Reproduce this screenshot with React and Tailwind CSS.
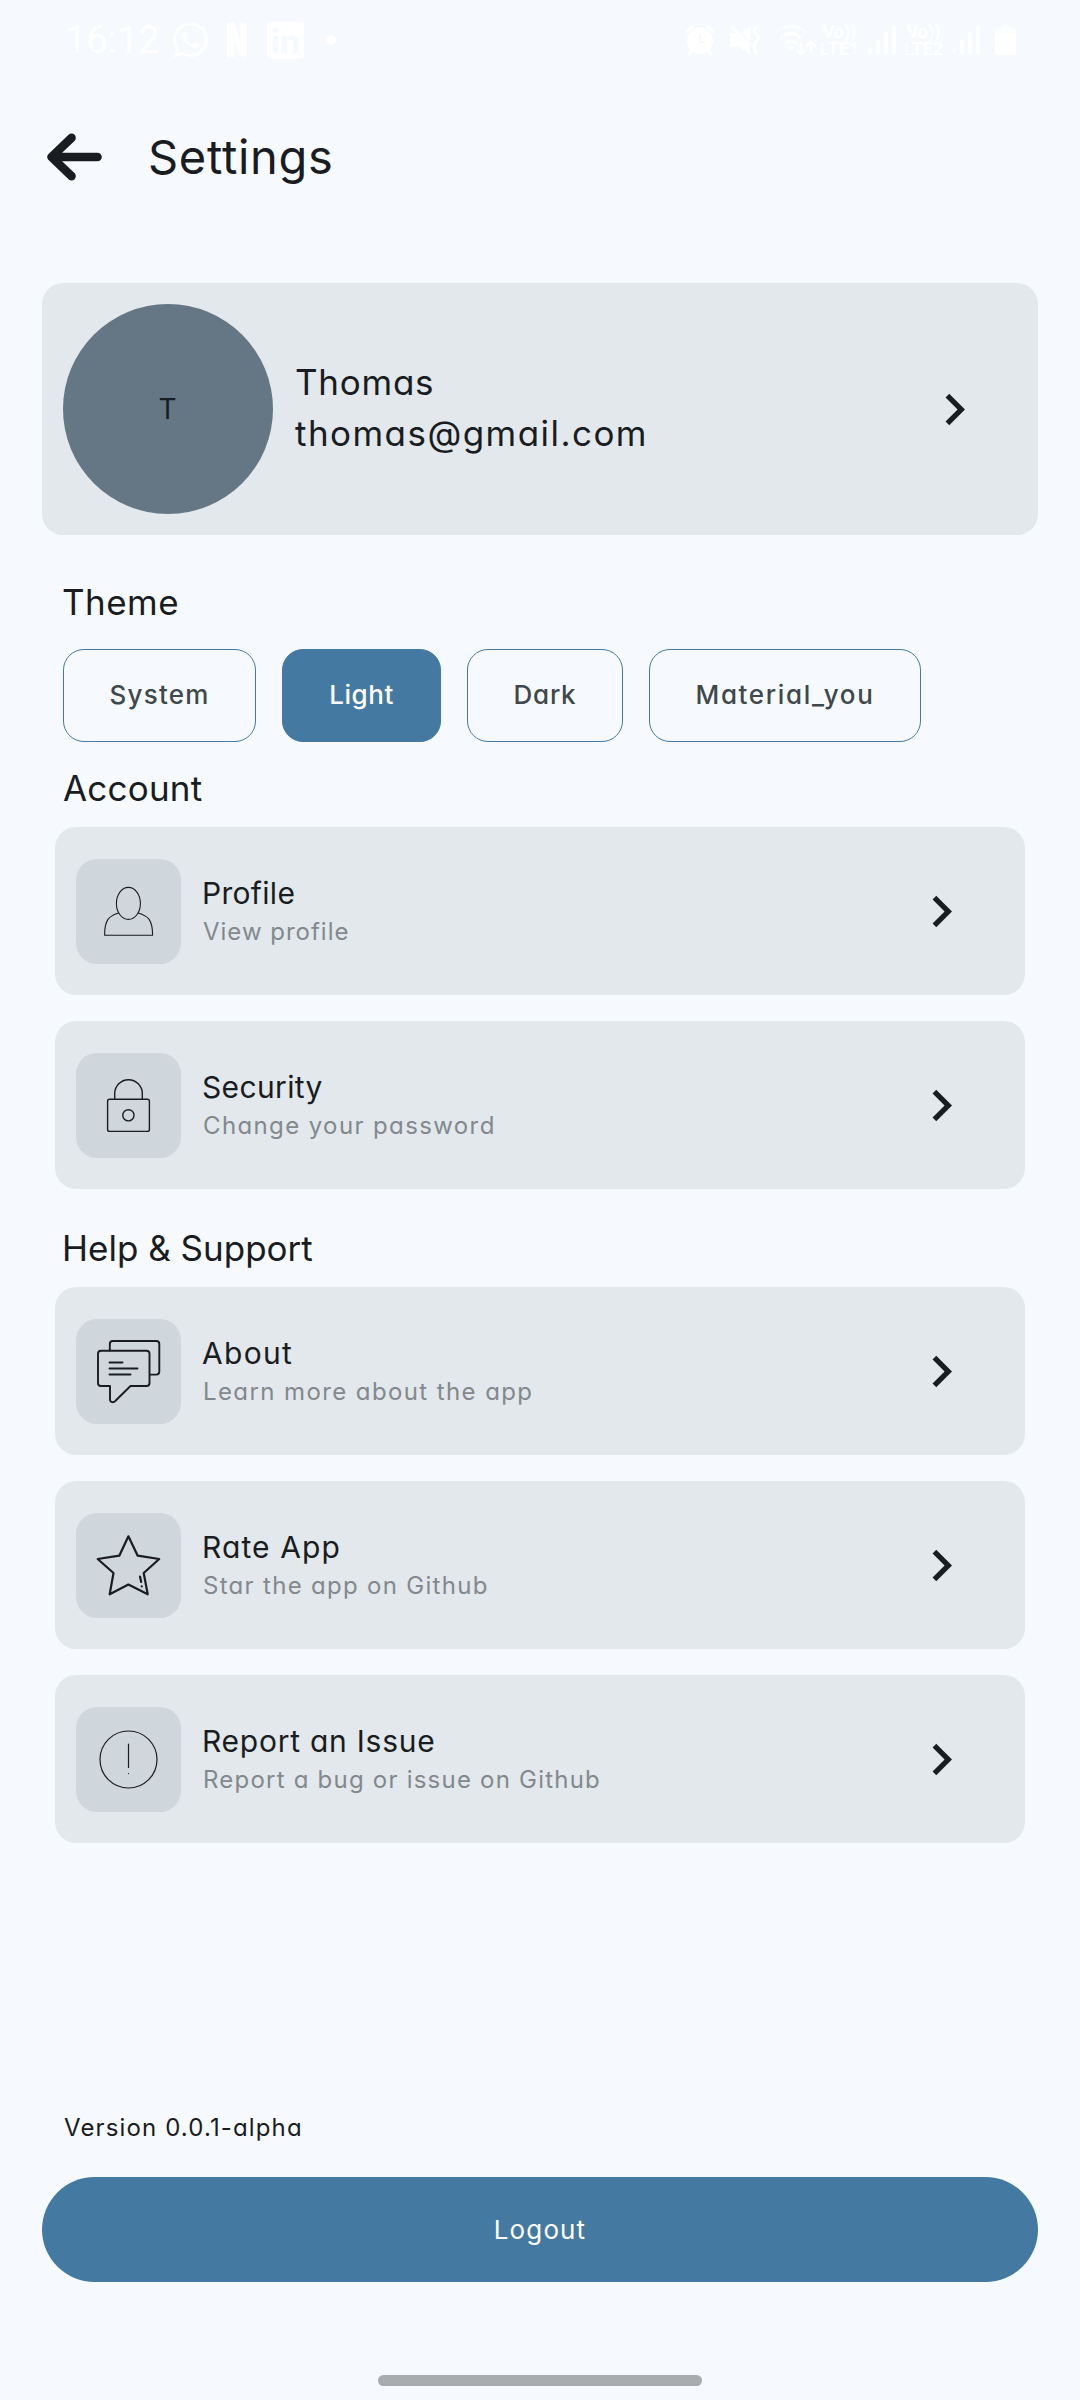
import React from "react";
import { FaWhatsapp, FaLinkedin } from "react-icons/fa";

const ink = "#191c20";

function Chevron() {
  return (
    <svg viewBox="0 0 24 24" className="h-[63px] w-[63px] shrink-0" fill={ink}>
      <path d="M10 6L8.59 7.41 13.17 12l-4.58 4.59L10 18l6-6z" />
    </svg>
  );
}

const iconProps = {
  viewBox: "0 0 105 105",
  className: "h-[105px] w-[105px]",
  fill: "none",
  stroke: ink,
  strokeLinejoin: "round",
  strokeLinecap: "round",
};

const ProfileIcon = () => (
  <svg {...iconProps} strokeWidth="1.1">
    <ellipse cx="52.4" cy="44.4" rx="12" ry="16" />
    <path d="M42.5 54C33 57 28.6 60.5 28.6 76.3H76.6C76.6 60.5 72 57 62.3 54" />
  </svg>
);

const LockIcon = () => (
  <svg {...iconProps} strokeWidth="1.4">
    <rect x="31.6" y="46.2" width="41.8" height="32.2" rx="2" />
    <path d="M38.7 46V40.5a13.8 13.8 0 0 1 27.6 0V46" />
    <circle cx="52.4" cy="62.3" r="5.6" />
  </svg>
);

const ChatIcon = () => (
  <svg {...iconProps} strokeWidth="1.9">
    <path d="M33.8 31.5V25a3 3 0 0 1 3-3H80.3a3 3 0 0 1 3 3V52.6a3 3 0 0 1-3 3H74" />
    <path d="M25 31.8H70.5a3 3 0 0 1 3 3V64a3 3 0 0 1-3 3H54.5L39.5 81.8C37.5 84 34 83.5 34 80.5V67H25a3 3 0 0 1-3-3V34.8a3 3 0 0 1 3-3Z" />
    <path d="M33.5 43.5H46.5M33.5 49.5H61.5M33.5 55.5H54.5" />
  </svg>
);

const StarIcon = () => (
  <svg {...iconProps} strokeWidth="2.2">
    <path d="M52.4 23.3L61.7 42.7L83.2 46L67.7 60L71.7 81.3L52.4 71.5L33.7 81.3L37.5 60L21.7 46L43.3 42.7Z" />
    <path d="M64 63.5L65.2 69M65.8 73.3v.1" />
  </svg>
);

const IssueIcon = () => (
  <svg {...iconProps} strokeWidth="1.2">
    <circle cx="52.5" cy="52.5" r="28.5" />
    <path d="M52.5 37V60.5M52.5 66.5v.1" />
  </svg>
);

function Row({ icon, title, titleClass, sub, subClass }) {
  return (
    <div className="flex h-[168px] items-center rounded-[21px] bg-[#e2e8eb] pr-[52px] pl-[21px]">
      <div className="h-[105px] w-[105px] shrink-0 rounded-[21px] bg-[#cfd6dc]">{icon}</div>
      <div className="ml-[21px] flex flex-1 flex-col pt-px whitespace-nowrap">
        <span className={"text-[30px] leading-[40px] " + titleClass}>{title}</span>
        <span className={"pl-px text-[24px] leading-[37px] text-[#82888c] " + subClass}>{sub}</span>
      </div>
      <Chevron />
    </div>
  );
}

function VoLte({ n, gap }) {
  return (
    <div className={"flex h-[34px] w-[39px] flex-col items-center font-['Roboto'] text-[18px] leading-[17px] font-bold whitespace-nowrap " + gap}>
      <span>Vo))</span>
      <span>{"LTE" + n}</span>
    </div>
  );
}

function Signal() {
  return (
    <svg viewBox="0 0 28 30" className="ml-[9px] h-[30px] w-[28px]" stroke="currentColor" strokeWidth="3.5" strokeLinecap="round">
      <path d="M2 24V28M10 17V28M18 9V28M26 2V28" />
    </svg>
  );
}

function StatusBar() {
  return (
    <div className="flex h-[80px] shrink-0 items-center justify-between pr-[64px] pl-[65px] text-white">
      <div className="flex items-center">
        <span className="w-[107px] font-['Roboto'] text-[38px] leading-none">16:12</span>
        <FaWhatsapp className="h-[40px] w-[37px]" />
        <svg viewBox="0 0 20 36" className="ml-[18px] h-[36px] w-[20px]" fill="currentColor">
          <path d="M0 0h7l6 17V0h7v36l-7-1L7 18v17l-7 1z" />
        </svg>
        <FaLinkedin className="ml-[20px] h-[42px] w-[37px]" />
        <span className="ml-[22px] h-[10px] w-[10px] rounded-full bg-white" />
      </div>
      <div className="flex items-center">
        <svg viewBox="0 0 30 30" className="h-[30px] w-[30px]" stroke="currentColor" strokeLinecap="round">
          <circle cx="15" cy="16" r="13" fill="currentColor" stroke="none" />
          <path d="M2 6L7 2M28 6L23 2M5 28L8 25M25 28L22 25" strokeWidth="3.5" fill="none" />
          <path d="M15 9.5V17H20" stroke="#f6faff" strokeWidth="2" fill="none" />
        </svg>
        <svg viewBox="0 0 30 30" className="ml-[15px] h-[30px] w-[30px]" fill="currentColor">
          <path d="M0 9H7L20 22V30L8 21H0zM12 8L20 1V16z" />
          <path d="M2 2L20 20M27 2Q22 5 26 9T26 17T26 28" fill="none" stroke="currentColor" strokeWidth="3" strokeLinecap="round" />
        </svg>
        <svg viewBox="0 0 42 32" className="ml-[14px] h-[32px] w-[42px]" fill="none" stroke="currentColor" strokeWidth="3" strokeLinecap="round">
          <path d="M2 8Q17-4 32 8" opacity=".5" />
          <path d="M7 14Q17 5 27 14M12 19Q17 15 22 19" />
          <circle cx="17" cy="24" r="1" fill="currentColor" />
          <path d="M27 20V29M23 26L27 30L31 26M37 28V18M33 22L37 18L41 22" strokeWidth="2.5" />
        </svg>
        <VoLte n="1" gap="ml-[4px]" />
        <Signal />
        <VoLte n="2" gap="ml-[8px]" />
        <Signal />
        <svg viewBox="0 0 21 30" className="ml-[15px] h-[30px] w-[21px]" fill="currentColor">
          <path d="M0 9V5Q0 3 3 3H6Q6 0 9 0H12Q15 0 15 3H18Q21 3 21 5V9z" opacity=".5" />
          <path d="M0 9H21V27Q21 30 18 30H3Q0 30 0 27z" />
        </svg>
      </div>
    </div>
  );
}

function Chip({ selected, size, label }) {
  return (
    <button
      className={
        "flex h-[93px] items-center justify-center rounded-[21px] border border-[#4479a1] pb-[2px] text-[26px] leading-none font-medium " +
        (selected ? "bg-[#4479a1] text-white " : "text-[#3f484c] ") +
        size
      }
    >
      {label}
    </button>
  );
}

export default function App() {
  return (
    <div className="flex h-[2400px] w-[1080px] flex-col overflow-hidden bg-[#f6faff] font-['Inter',sans-serif] text-[#191c20] [font-feature-settings:'cv11']">
      <StatusBar />

      <header className="flex h-[154px] shrink-0 items-center pl-[46px]">
        <svg viewBox="0 0 56 48" className="h-[48px] w-[56px]" fill="none" stroke={ink} strokeWidth="8.6" strokeLinecap="round" strokeLinejoin="round">
          <path d="M51.5 24H7M25.5 4.8L5.5 24L25.5 43.2" />
        </svg>
        <h1 className="ml-[46px] text-[47px] leading-[60px] tracking-[0.7px]">Settings</h1>
      </header>

      <section className="mx-[42px] mt-[49px] flex h-[252px] shrink-0 items-center rounded-[21px] bg-[#e2e8eb] pr-[52px] pl-[21px]">
        <div className="flex h-[210px] w-[210px] shrink-0 items-center justify-center rounded-full bg-[#657785] text-[28px]">
          <span className="pr-px">T</span>
        </div>
        <div className="ml-[22px] flex flex-1 flex-col pb-[2px] text-[35px] leading-[51px]">
          <span className="tracking-[0.75px]">Thomas</span>
          <span className="tracking-[1.45px]">thomas@gmail.com</span>
        </div>
        <Chevron />
      </section>

      <h2 className="mt-[42px] ml-[62px] text-[35px] leading-[50px] tracking-[0.47px]">Theme</h2>
      <div className="mt-[22px] ml-[63px] flex gap-[26px]">
        <Chip label="System" size="w-[193px] tracking-[1.2px]" />
        <Chip label="Light" selected size="w-[159px] tracking-[0.55px]" />
        <Chip label="Dark" size="w-[156px] tracking-[0.73px]" />
        <Chip label="Material_you" size="w-[272px] tracking-[1.65px]" />
      </div>

      <h2 className="mt-[21px] ml-[63px] text-[35px] leading-[50px] tracking-[0.2px]">Account</h2>
      <div className="mx-[55px] mt-[14px] flex flex-col gap-[26px]">
        <Row icon={<ProfileIcon />} title="Profile" titleClass="tracking-[0.3px]" sub="View profile" subClass="tracking-[0.99px]" />
        <Row icon={<LockIcon />} title="Security" titleClass="tracking-[0.35px]" sub="Change your password" subClass="tracking-[1.38px]" />
      </div>

      <h2 className="mt-[34px] ml-[62px] text-[35px] leading-[50px]">Help &amp; Support</h2>
      <div className="mx-[55px] mt-[14px] flex flex-col gap-[26px]">
        <Row icon={<ChatIcon />} title="About" titleClass="tracking-[1.3px]" sub="Learn more about the app" subClass="tracking-[1.4px]" />
        <Row icon={<StarIcon />} title="Rate App" titleClass="tracking-[1.1px]" sub="Star the app on Github" subClass="tracking-[1.3px]" />
        <Row icon={<IssueIcon />} title="Report an Issue" titleClass="tracking-[0.75px]" sub="Report a bug or issue on Github" subClass="tracking-[1.22px]" />
      </div>

      <p className="mt-auto ml-[64px] text-[24px] leading-[40px] tracking-[1.13px]">Version 0.0.1-alpha</p>
      <button className="mx-[42px] mt-[29px] flex h-[105px] shrink-0 items-center justify-center rounded-full bg-[#4479a1] text-[26px] tracking-[1.12px] text-white">
        Logout
      </button>
      <div className="mx-auto mt-[93px] mb-[14px] h-[11px] w-[324px] shrink-0 rounded-full bg-[#a8acaf]" />
    </div>
  );
}
